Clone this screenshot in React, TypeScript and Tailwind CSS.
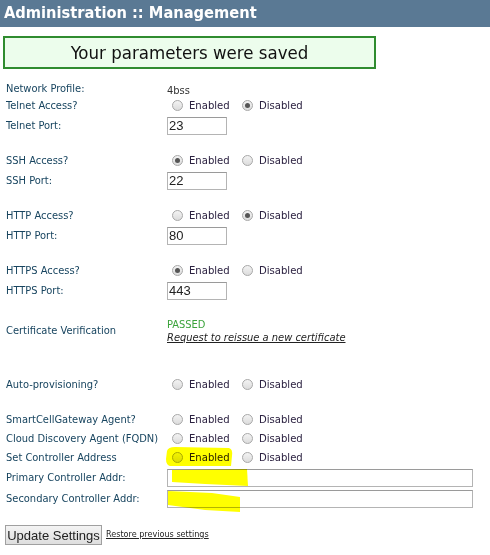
import React from "react";

const font = { fontFamily: "Tahoma, 'DejaVu Sans Condensed', 'DejaVu Sans', sans-serif" };

const Radio = ({ checked }: { checked?: boolean }) => (
  <span className="relative inline-flex size-[11px] shrink-0 items-center justify-center rounded-full border border-[#a8a8a8] bg-gradient-to-b from-[#f3f3f3] to-[#dcdcdc]">
    {checked && <span className="size-[5px] rounded-full bg-[#555]" />}
  </span>
);

const RadioPair = ({ value }: { value?: "on" | "off" }) => (
  <div className="flex items-center pl-[5px] text-[11.2px] text-[#2b2140]">
    <Radio checked={value === "on"} />
    <span className="ml-[6px] mt-[2px] w-[53px]">Enabled</span>
    <Radio checked={value === "off"} />
    <span className="ml-[6px] mt-[2px]">Disabled</span>
  </div>
);

const TextBox = ({ value, wide }: { value?: string; wide?: boolean }) => (
  <div
    className={`flex h-[18px] items-center border border-[#b4b4b4] border-t-[#9a9a9a] bg-white px-[1px] font-['Liberation_Sans'] text-[13px] text-[#222] ${
      wide ? "w-[306px]" : "w-[60px]"
    }`}
  >
    {value}
  </div>
);

const Row = ({
  label,
  h,
  children,
}: {
  label: string;
  h: string;
  children?: React.ReactNode;
}) => (
  <div className={`flex items-center ${h}`}>
    <div className="w-[167px] shrink-0 whitespace-nowrap pl-[6px] pt-[1px] text-[11px] text-[#17445f]">{label}</div>
    <div>{children}</div>
  </div>
);

export default function App() {
  const groups: { name: string; access: "on" | "off"; port: string }[] = [
    { name: "Telnet", access: "off", port: "23" },
    { name: "SSH", access: "on", port: "22" },
    { name: "HTTP", access: "off", port: "80" },
    { name: "HTTPS", access: "on", port: "443" },
  ];

  return (
    <div className="relative h-[555px] w-[490px] overflow-hidden bg-white" style={font}>
      <div className="flex h-[27px] items-center bg-[#5a7994] pl-[4px] text-[16.3px] font-bold text-white">
        Administration :: Management
      </div>

      <div className="ml-[3px] mt-[9px] flex h-[33px] w-[373px] items-center justify-center border-2 border-[#2f8c2f] bg-[#ecfdec] text-[18.5px] text-[#111]">
        Your parameters were saved
      </div>

      <div className="mt-[12px]">
        <Row label="Network Profile:" h="h-[15px]">
          <span className="text-[11px] text-[#333]">4bss</span>
        </Row>
        {groups.map((g, i) => (
          <div key={g.name}>
            <Row label={`${g.name} Access?`} h="h-[19px]">
              <RadioPair value={g.access} />
            </Row>
            <Row label={`${g.name} Port:`} h="h-[22px]">
              <TextBox value={g.port} />
            </Row>
            {i < groups.length - 1 && <div className="h-[14px]" />}
          </div>
        ))}

        <div className="h-[14px]" />
        <Row label="Certificate Verification" h="h-[29px]">
          <div className="flex flex-col text-[11px] leading-[13px]">
            <span className="text-[#3aa23a]">PASSED</span>
            <span className="italic text-[#222] underline">
              Request to reissue a new certificate
            </span>
          </div>
        </Row>

        <div className="h-[30px]" />
        <Row label="Auto-provisioning?" h="h-[19px]">
          <RadioPair />
        </Row>
        <div className="h-[16px]" />
        <Row label="SmartCellGateway Agent?" h="h-[19px]">
          <RadioPair />
        </Row>
        <Row label="Cloud Discovery Agent (FQDN)" h="h-[19px]">
          <RadioPair />
        </Row>
        <Row label="Set Controller Address" h="h-[19px]">
          <RadioPair />
        </Row>
        <Row label="Primary Controller Addr:" h="h-[21px]">
          <TextBox wide />
        </Row>
        <Row label="Secondary Controller Addr:" h="h-[22px]">
          <TextBox wide />
        </Row>

        <div className="mt-[15px] flex items-center pl-[5px]">
          <button className="h-[20px] w-[97px] whitespace-nowrap border border-[#a0a0a0] bg-gradient-to-b from-[#f4f4f4] to-[#dedede] px-0 font-['Liberation_Sans'] text-[13px] text-[#222]">
            Update Settings
          </button>
          <a className="ml-[4px] text-[9px] text-[#222] underline">
            Restore previous settings
          </a>
        </div>
      </div>

      <svg
        className="pointer-events-none absolute left-0 top-0 mix-blend-multiply"
        width="490"
        height="555"
      >
        <path d="M167 451 Q168 447 175 447 L229 448 Q233 449 232 456 L231 466 L170 466 Q166 465 166 459 Z" fill="#ffff00" />
        <path d="M172 470 L247 469 L248 486 L205 484 L172 482 Z" fill="#ffff00" />
        <path d="M168 491 L212 493 L240 497 L240 512 L205 510 L168 505 Z" fill="#ffff00" />
      </svg>
    </div>
  );
}
